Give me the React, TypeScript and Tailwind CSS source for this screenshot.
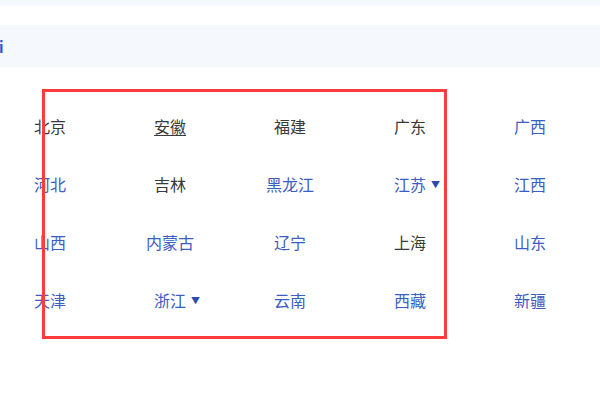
import React from 'react';

type Region = { name: string; link?: boolean; more?: boolean; underline?: boolean };

const regions: Region[] = [
  { name: '北京' },
  { name: '安徽', underline: true },
  { name: '福建' },
  { name: '广东' },
  { name: '广西', link: true },
  { name: '河北', link: true },
  { name: '吉林' },
  { name: '黑龙江', link: true },
  { name: '江苏', link: true, more: true },
  { name: '江西', link: true },
  { name: '山西', link: true },
  { name: '内蒙古', link: true },
  { name: '辽宁', link: true },
  { name: '上海' },
  { name: '山东', link: true },
  { name: '天津', link: true },
  { name: '浙江', link: true, more: true },
  { name: '云南', link: true },
  { name: '西藏', link: true },
  { name: '新疆', link: true },
];

export default function App() {
  return (
    <div
      className="relative w-[600px] h-[398px] overflow-hidden bg-white"
      style={{ fontFamily: '"Noto Sans CJK SC", "Noto Sans", sans-serif' }}
    >
      <div className="h-[6px] bg-[#f5f8fc]" />
      <div className="mt-[19px] h-[42px] bg-[#f5f8fc] flex items-center">
        <span className="-ml-[1px] text-[15px] font-bold leading-none text-[#1d5bd0]">i</span>
      </div>

      {/* region list */}
      <div className="mt-[30px] grid grid-cols-5 gap-x-5 w-[580px]">
        {regions.map((r) => (
          <div key={r.name} className="h-[58px] flex items-center justify-center">
            <span
              className={`relative text-[16px] leading-none ${
                r.link ? 'text-[#3c5dc2]' : 'text-[#3a3a3a]'
              } ${r.underline ? 'underline underline-offset-[2px]' : ''}`}
            >
              {r.name}
              {r.more && (
                <span className="absolute left-full top-1/2 -translate-y-1/2 ml-[5px] text-[9px] text-[#2a4bb0]">
                  ▼
                </span>
              )}
            </span>
          </div>
        ))}
      </div>

      {/* annotation box */}
      <div className="absolute left-[42px] top-[89px] w-[405px] h-[250px] border-[3px] border-[#ff3b3b] pointer-events-none" />
    </div>
  );
}
